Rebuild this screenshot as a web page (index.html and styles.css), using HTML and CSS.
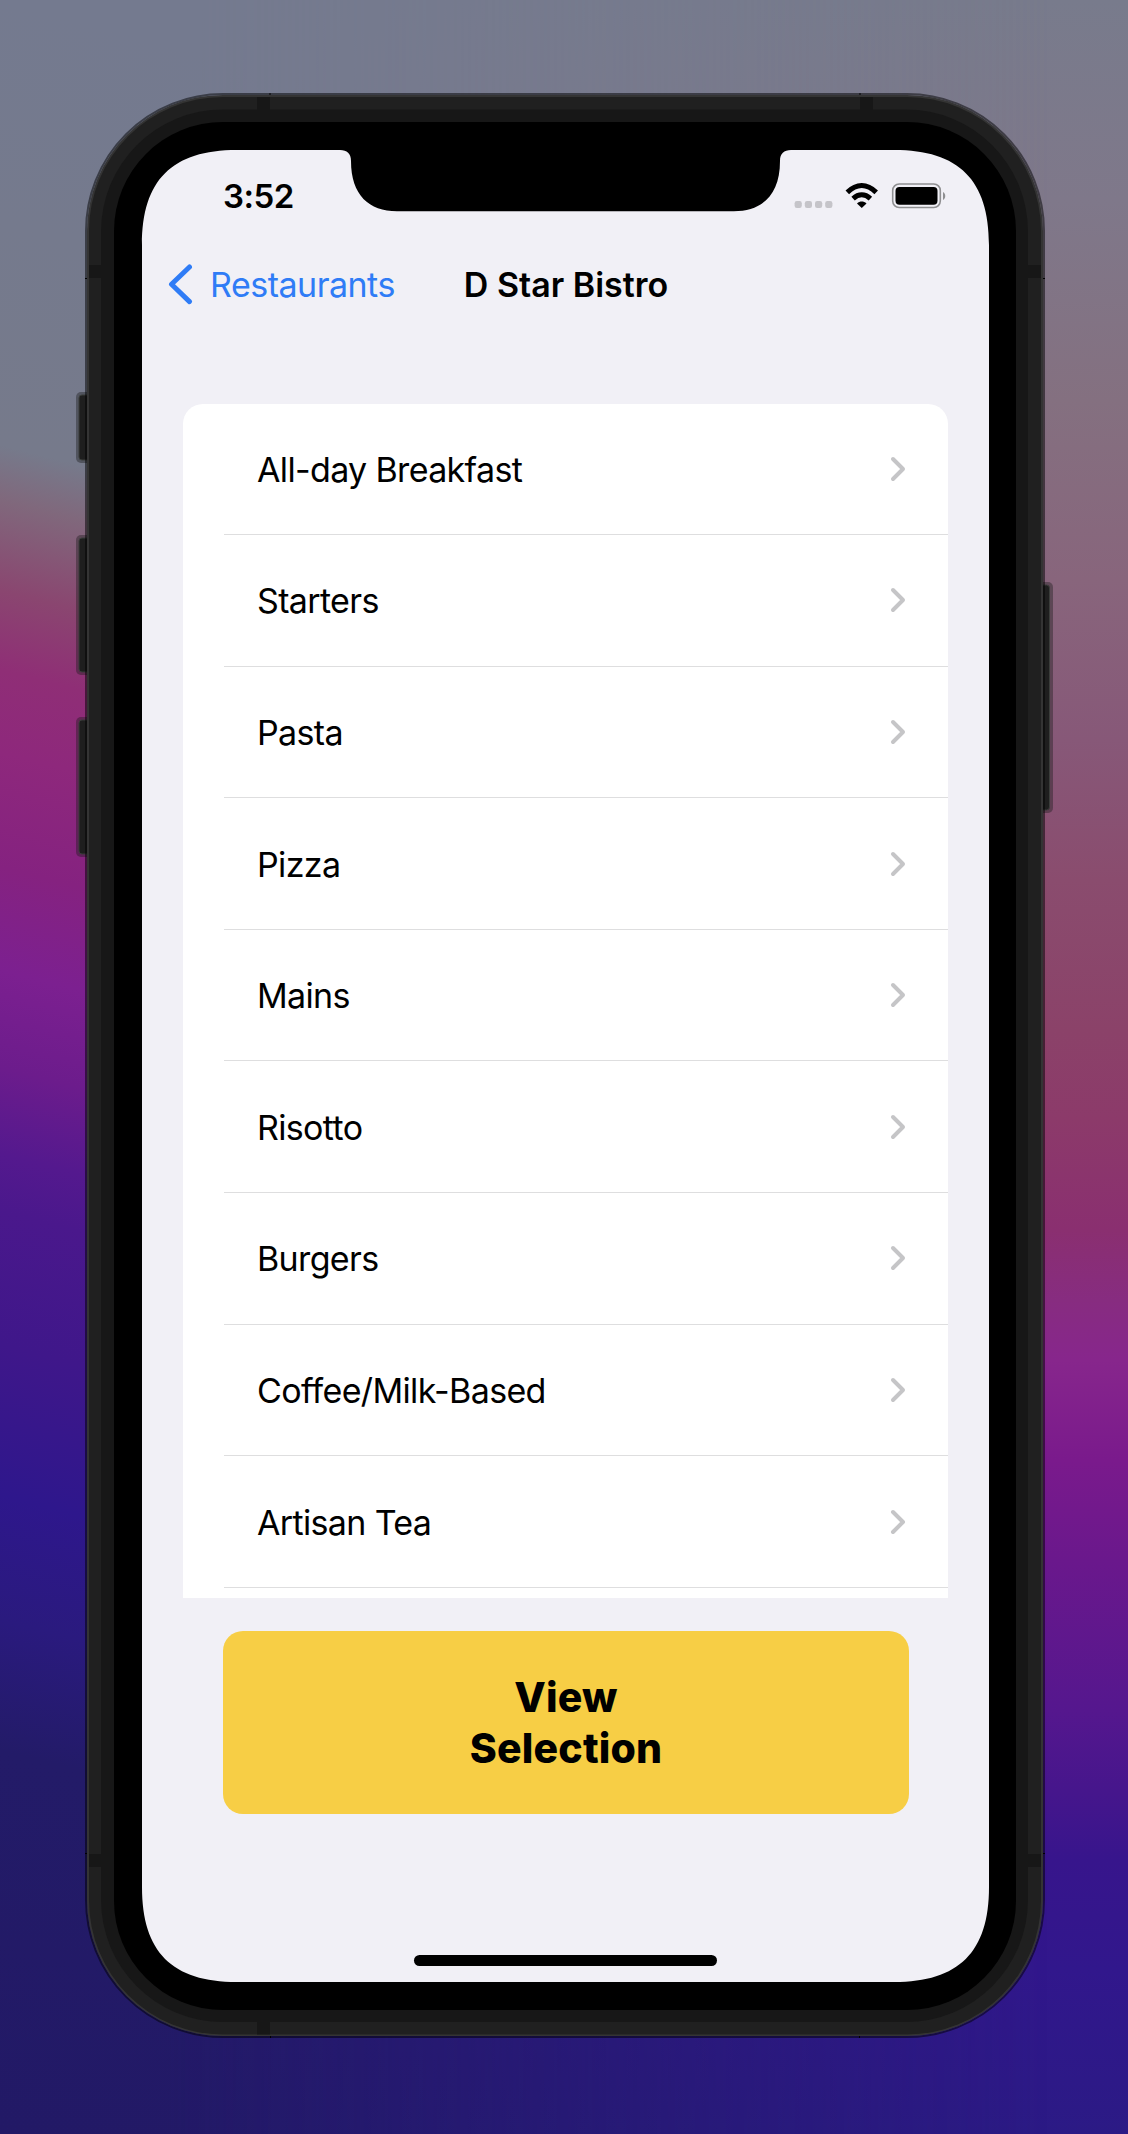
FILE: index.html
```html
<!DOCTYPE html>
<html lang="en">
<head>
<meta charset="utf-8">
<title>D Star Bistro</title>
<link rel="stylesheet" href="styles.css">
</head>
<body>
<div class="stage">
<div class="phone">
  <svg class="frame" width="980" height="1945" viewBox="75 93 980 1945" aria-hidden="true">
    <g class="key">
      <rect x="76" y="392" width="20" height="71" rx="5"/>
      <rect x="76" y="535" width="20" height="140" rx="5"/>
      <rect x="76" y="717" width="20" height="140" rx="5"/>
      <rect x="1033" y="582" width="20" height="231" rx="5"/>
    </g>
    <g class="key-face">
      <rect x="79" y="395" width="16" height="65" rx="3"/>
      <rect x="79" y="538" width="16" height="134" rx="3"/>
      <rect x="79" y="720" width="16" height="134" rx="3"/>
      <rect x="1034" y="585" width="15.500" height="225" rx="3"/>
    </g>
    <rect class="halo" x="86" y="94" width="958" height="1943" rx="137"/>
    <rect class="rim" x="87" y="95" width="956" height="1941" rx="136"/>
    <rect class="band" x="89" y="97" width="952" height="1937.500" rx="134"/>
    <rect class="inner" x="101" y="109.500" width="927" height="1912.500" rx="122"/>
    <path class="inner" d="M257 97h13v13h-13zM860 97h13v13h-13zM89 265h13v13H89zM1028 265h13v13h-13zM89 1854h13v13H89zM1028 1854h13v13h-13zM257 2021h13v13.500h-13z"/>
    <path class="tick" d="M270 93v2M860 93v2M85 278.500h2M1043 278.500h2M85 1853.500h2M1043 1853.500h2M270.500 2036v2M859.500 2036v2"/>
    <rect x="114" y="122" width="902" height="1888" rx="109"/>
    <path class="glass" d="M142 245C142 180 172 150 237 150H340C347 150 351 153.500 351 161C351 195 369 211.300 397 211.300H734C762 211.300 780 195 780 161C780 153.500 784 150 791 150H894C959 150 989 180 989 245V1887C989 1952 959 1982 894 1982H237C172 1982 142 1952 142 1887Z"/>
  </svg>

  <main class="screen">
    <header class="status">
      <span class="time">3:52</span>
      <svg class="indicators" width="152" height="27" viewBox="794 182 152 27" aria-hidden="true">
        <g fill="#c5c4c9">
          <rect x="794.600" y="201" width="7.200" height="7" rx="2.200"/>
          <rect x="804.800" y="201" width="7.200" height="7" rx="2.200"/>
          <rect x="815" y="201" width="7.200" height="7" rx="2.200"/>
          <rect x="825.200" y="201" width="7.200" height="7" rx="2.200"/>
        </g>
        <g fill="none" stroke="#000">
          <path stroke-width="5" d="M847.300 192.400C856.500 183.300 867 183.300 876.200 192.400"/>
          <path stroke-width="5" d="M853.100 198.600C858.500 193.600 865 193.600 870.400 198.600"/>
        </g>
        <path d="M857 203.400C860 200.900 863.500 200.900 866.500 203.400L861.750 208Z"/>
        <rect x="892.700" y="184" width="47.600" height="23.500" rx="6.500" fill="none" stroke="#8f8f91" stroke-width="1.600"/>
        <rect x="895.500" y="187" width="42" height="17.800" rx="4"/>
        <path d="M943 192c3 1.500 3 6.500 0 8z" fill="#8f8f91"/>
      </svg>
    </header>

    <nav class="nav">
      <a class="back">
        <svg width="25" height="41" viewBox="0 0 25 41" aria-hidden="true"><path d="M21.500 3L3.500 20.300L21.500 37.600"/></svg>
        <span>Restaurants</span>
      </a>
      <h1>D Star Bistro</h1>
    </nav>

    <ul class="menu">
      <li><span>All-day Breakfast</span><svg class="chevron" viewBox="0 0 16 26"><path d="M3 3L13 13L3 23"/></svg></li>
      <li><span>Starters</span><svg class="chevron" viewBox="0 0 16 26"><path d="M3 3L13 13L3 23"/></svg></li>
      <li><span>Pasta</span><svg class="chevron" viewBox="0 0 16 26"><path d="M3 3L13 13L3 23"/></svg></li>
      <li><span>Pizza</span><svg class="chevron" viewBox="0 0 16 26"><path d="M3 3L13 13L3 23"/></svg></li>
      <li><span>Mains</span><svg class="chevron" viewBox="0 0 16 26"><path d="M3 3L13 13L3 23"/></svg></li>
      <li><span>Risotto</span><svg class="chevron" viewBox="0 0 16 26"><path d="M3 3L13 13L3 23"/></svg></li>
      <li><span>Burgers</span><svg class="chevron" viewBox="0 0 16 26"><path d="M3 3L13 13L3 23"/></svg></li>
      <li><span>Coffee/Milk-Based</span><svg class="chevron" viewBox="0 0 16 26"><path d="M3 3L13 13L3 23"/></svg></li>
      <li><span>Artisan Tea</span><svg class="chevron" viewBox="0 0 16 26"><path d="M3 3L13 13L3 23"/></svg></li>
    </ul>

    <button class="view">View<br>Selection</button>
    <div class="home"></div>
  </main>
</div>
</div>
</body>
</html>
```

FILE: styles.css
```css
* { box-sizing: border-box; }

body {
  margin: 0;
  font-family: Inter, "Liberation Sans", sans-serif;
  color: #000;
}

.stage {
  display: flow-root;
  position: relative;
  width: 1128px;
  height: 2134px;
  overflow: clip;
  background: linear-gradient(180deg,
    #787b8c 0, #7f788a 200px, #847080 400px, #88657c 580px, #875878 740px,
    #8a4c6e 880px, #8b4269 1030px, #8c3a6a 1120px, #8a2f70 1230px,
    #872c80 1300px, #87268c 1360px, #7a1a8c 1460px, #6a188c 1560px,
    #55178e 1710px, #46168c 1790px, #37158c 1860px, #31178c 1970px, #2b1a85 2134px);
}

/* left-hand colour wash, tilted and faded towards the right edge */
.stage::before {
  content: "";
  position: absolute;
  inset: -400px 0 0;
  transform-origin: 0 0;
  transform: skewY(14deg);
  background: linear-gradient(180deg,
    #747a8f 400px, #767a8b 845px, #80687c 900px, #8a4670 990px, #8f2e76 1070px,
    #8e287c 1152px, #852280 1267px, #7c2090 1370px, #6c1c8c 1467px,
    #54198e 1554px, #4a188c 1611px, #3f178a 1745px, #2e178c 1895px,
    #2a1a7e 2020px, #231b68 2150px, #221966 2534px);
  -webkit-mask-image: linear-gradient(90deg, #000 15%, transparent 93%);
  mask-image: linear-gradient(90deg, #000 15%, transparent 93%);
}

.phone {
  position: relative;
  display: grid;
  width: 980px;
  height: 1945px;
  margin: 93px 0 0 75px;
}

.frame, .screen { grid-area: 1 / 1; }
.frame { display: block; }
.key { fill: #1c1c1c; fill-opacity: .4; }
.key-face { fill: #1e1e1e; stroke: #3a3d3a; stroke-width: 1; }
.halo { fill: none; stroke: #000; stroke-opacity: .5; stroke-width: 2; }
.rim { fill: #343434; }
.band { fill: #202020; }
.inner { fill: #171717; }
.tick { stroke: #000; stroke-width: 1; }
.glass { fill: #f1f0f6; }

.screen {
  display: flex;
  flex-direction: column;
  width: 847px;
  height: 1832px;
  margin: 57px 0 0 67px;
}

.status {
  display: flex;
  justify-content: space-between;
  align-items: center;
  height: 92px;
  padding: 0 43px 0 81px;
}
.time { font-size: 33px; font-weight: 600; letter-spacing: -.5px; }
.indicators { margin-bottom: 1px; }

.nav {
  display: grid;
  grid-template-columns: 1fr auto 1fr;
  align-items: center;
  height: 84px;
  padding: 0 25px 0 26px;
}
.nav h1 {
  margin: 0;
  font-size: 34px;
  font-weight: 600;
  white-space: nowrap;
}
.back {
  display: flex;
  align-items: center;
  gap: 17px;
  color: #2f7cf6;
  font-size: 34px;
  letter-spacing: -.5px;
}
.back path { fill: none; stroke: currentColor; stroke-width: 5; stroke-linecap: round; stroke-linejoin: round; }

.menu {
  list-style: none;
  width: 765px;
  height: 1194px;
  margin: 77.500px 0 0 41px;
  padding: 0;
  overflow: hidden;
  background: #fff;
  border-radius: 20px 20px 0 0;
}
.menu li {
  display: flex;
  align-items: center;
  justify-content: space-between;
  height: 131.600px;
  margin-left: 41px;
  padding: 0 42px 0 33px;
  border-bottom: 1px solid #dededf;
  font-size: 34px;
  letter-spacing: -.65px;
}
.menu span { padding-top: 1px; }
.chevron { width: 16px; height: 26px; }
.chevron path { fill: none; stroke: #c5c5c7; stroke-width: 4; stroke-linecap: round; stroke-linejoin: round; }

.view {
  width: 686px;
  height: 183px;
  margin: 33.500px 0 0 81px;
  padding: 0;
  border: 0;
  border-radius: 20px;
  background: #f7ce45;
  color: #000;
  font: 800 41px/51px Inter, "Liberation Sans", sans-serif;
  letter-spacing: .15px;
}
.home {
  width: 303px;
  height: 11px;
  margin: 141px 0 0 272px;
  border-radius: 6px;
  background: #000;
}
```
